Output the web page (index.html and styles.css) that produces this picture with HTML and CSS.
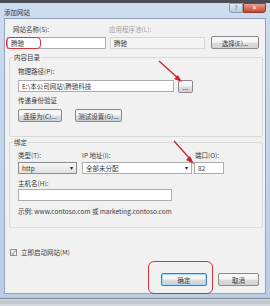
FILE: index.html
```html
<!DOCTYPE html>
<html lang="zh-CN">

<head>
  <meta charset="UTF-8">
  <title>添加网站</title>
  <link rel="stylesheet" href="styles.css">
</head>

<body>
  <div class="topstrip"></div>

  <div class="window">
    <div class="titlebar">
      <span class="title">添加网站</span>
      <div class="controls">
        <span class="ctl help">?</span>
        <span class="ctl close">✕</span>
      </div>
    </div>

    <div class="panel">

      <div class="row labels">
        <span class="lbl site-lbl">网站名称(S):</span>
        <span class="lbl disabled">应用程序池(L):</span>
      </div>
      <div class="row fields">
        <div class="input site-name">腾驰</div>
        <div class="input pool">腾驰</div>
        <div class="btn select-btn">选择(E)...</div>
      </div>

      <div class="group content-group">
        <span class="legend">内容目录</span>
        <div class="lbl">物理路径(P):</div>
        <div class="row">
          <div class="input path">E:\本公司网站\腾驰科技</div>
          <div class="btn browse">...</div>
        </div>
        <div class="lbl pass">传递身份验证</div>
        <div class="row buttons">
          <div class="btn connect">连接为(C)...</div>
          <div class="btn test">测试设置(G)...</div>
        </div>
      </div>

      <div class="group binding-group">
        <span class="legend">绑定</span>
        <div class="row labels">
          <span class="lbl type-lbl">类型(T):</span>
          <span class="lbl ip-lbl">IP 地址(I):</span>
          <span class="lbl">端口(O):</span>
        </div>
        <div class="row">
          <div class="input combo type">http <span class="caret">▾</span></div>
          <div class="input combo ip">全部未分配 <span class="caret">▾</span></div>
          <div class="input port">82</div>
        </div>
        <div class="lbl host-lbl">主机名(H):</div>
        <div class="input host"></div>
        <div class="lbl example">示例: www.contoso.com 或 marketing.contoso.com</div>
      </div>

      <div class="row start">
        <span class="check">✓</span>
        <span class="lbl">立即启动网站(M)</span>
      </div>

      <div class="row footer">
        <div class="btn ok">确定</div>
        <div class="btn cancel">取消</div>
      </div>

      <!-- annotations drawn over the dialog -->
      <div class="mark mark-name"></div>
      <div class="mark mark-ok"></div>
      <svg class="arrows" width="262" height="276" viewBox="0 0 262 276">
        <g stroke="#c9252c" stroke-width="1.3" fill="#c9252c">
          <line x1="154" y1="42" x2="174" y2="60" />
          <polygon points="177,63 169,60 173,56" stroke="none" />
          <line x1="169" y1="122" x2="186" y2="141" />
          <polygon points="189,145 181,141 185,137" stroke="none" />
        </g>
      </svg>
    </div>
  </div>

  <div class="bottomstrip"></div>
</body>

</html>
```

FILE: styles.css
```css
* {
  margin: 0;
  padding: 0;
  box-sizing: border-box;
}

body {
  width: 270px;
  height: 306px;
  overflow: hidden;
  background: #d6dadf;
  font-family: "Noto Sans CJK SC", "Noto Sans", sans-serif;
  font-size: 6.5px;
  line-height: 8px;
  color: #3a3a3a;
}

.topstrip {
  height: 3px;
  background: #4b4f55;
}

.window {
  background: linear-gradient(#cddcee, #bacde3);
  padding: 0 4px 4px 4px;
  border-bottom: 1px solid #7d8a99;
}

.titlebar {
  height: 15px;
  display: flex;
  justify-content: space-between;
  align-items: flex-start;
}

.title {
  margin: 5px 0 0 0;
  color: #333;
}

.controls {
  display: flex;
}

.ctl {
  height: 10px;
  display: flex;
  align-items: center;
  justify-content: center;
  font-size: 6px;
  border: 1px solid #8a9cb3;
}

.help {
  width: 14px;
  background: linear-gradient(#e2ebf5, #b9c9dc);
  color: #556;
  border-radius: 0 0 0 3px;
}

.close {
  width: 23px;
  background: linear-gradient(#e9a08f, #c8432d);
  color: #fff;
  border-color: #8c3a2c;
  border-radius: 0 0 3px 0;
}

.panel {
  position: relative;
  height: 276px;
  background: #f1f1f1;
  border: 1px solid #8ea5c0;
  padding: 6px 0 0 0;
}

.row {
  display: flex;
  align-items: center;
}

.lbl {
  display: block;
  white-space: nowrap;
}

.disabled {
  color: #a3a3a3;
}

.labels {
  height: 8px;
}

.labels .site-lbl {
  margin-left: 8px;
  width: 96px;
}

.fields {
  margin-top: 3px;
  padding-left: 2px;
}

.input {
  height: 12px;
  background: #fff;
  border: 1px solid #abadb3;
  padding: 0 3px;
  display: flex;
  align-items: center;
  white-space: nowrap;
}

.site-name {
  width: 99px;
}

.pool {
  width: 95px;
  margin-left: 4px;
  background: #f4f4f4;
  border-color: #d5d5d5;
}

.btn {
  height: 13px;
  display: flex;
  align-items: center;
  justify-content: center;
  background: linear-gradient(#f6f6f6 45%, #dcdcdc 55%, #d2d2d2);
  border: 1px solid #8a8a8a;
  border-radius: 2px;
  white-space: nowrap;
}

.select-btn {
  width: 48px;
  margin-left: 6px;
}

.group {
  position: relative;
  margin: 0 2px 0 4px;
  border: 1px solid #d9d9d9;
  border-radius: 2px;
  padding: 5px 0 0 8px;
}

.legend {
  position: absolute;
  top: -5px;
  left: 3px;
  padding: 0 1px;
  background: #f1f1f1;
}

.content-group {
  margin-top: 8px;
  height: 80px;
}

.content-group .lbl {
  margin-top: 4px;
}

.content-group .row {
  margin-top: 3px;
}

.path {
  width: 156px;
}

.browse {
  width: 15px;
  margin-left: 4px;
  margin-top: 2px;
}

.content-group .pass {
  margin-top: 3px;
}

.content-group .buttons {
  margin-top: 5px;
}

.connect {
  width: 44px;
}

.test {
  width: 47px;
  margin-left: 13px;
}

.binding-group {
  margin-top: 5px;
  height: 86px;
}

.binding-group .labels {
  margin-top: 5px;
}

.type-lbl {
  width: 64px;
}

.ip-lbl {
  width: 113px;
}

.binding-group .row {
  margin-top: 3px;
}

.combo {
  justify-content: space-between;
}

.caret {
  font-size: 6px;
  color: #222;
}

.type {
  width: 59px;
  background: linear-gradient(#f6f6f6, #e2e2e2);
  border-color: #8a8a8a;
}

.ip {
  width: 110px;
  margin-left: 5px;
}

.port {
  width: 30px;
  margin-left: 2px;
}

.host-lbl {
  margin-top: 5px;
}

.host {
  width: 154px;
  margin-top: 2px;
}

.example {
  margin-top: 6px;
}

.start {
  margin: 20px 0 0 5px;
}

.check {
  width: 7px;
  height: 7px;
  border: 1px solid #8f8f8f;
  background: #f4f4f4;
  font-size: 6px;
  line-height: 5px;
  text-align: center;
  color: #333;
  margin-right: 4px;
}

.footer {
  justify-content: flex-end;
  margin-top: 17px;
  padding-right: 6px;
}

.ok {
  width: 46px;
  border-color: #3c7fb1;
  box-shadow: inset 0 0 0 1px #a9dcf7;
}

.cancel {
  width: 41px;
  margin-left: 11px;
}

.mark {
  position: absolute;
  border: 1.5px solid #d4323c;
  border-radius: 4px;
}

.mark-name {
  left: 1px;
  top: 18px;
  width: 35px;
  height: 12px;
}

.mark-ok {
  left: 143px;
  top: 242px;
  width: 65px;
  height: 33px;
  border-radius: 6px;
}

.arrows {
  position: absolute;
  left: 0;
  top: 0;
  pointer-events: none;
}

.bottomstrip {
  height: 4px;
  margin-top: 1px;
  background: #c3c9d0;
}
```
